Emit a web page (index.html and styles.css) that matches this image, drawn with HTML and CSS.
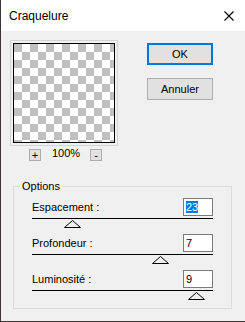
FILE: index.html
```html
<!DOCTYPE html>
<html lang="fr">
<head>
  <meta charset="UTF-8">
  <title>Craquelure</title>
  <link rel="stylesheet" href="styles.css">
</head>
<body>
  <div class="dialog">
    <div class="titlebar">
      <span class="title">Craquelure</span>
      <svg class="close" width="10" height="10" viewBox="0 0 10 10">
        <path d="M0.5 0.5 L9.5 9.5 M9.5 0.5 L0.5 9.5" stroke="#000" stroke-width="1.1" fill="none"/>
      </svg>
    </div>

    <div class="content">
      <div class="top">
        <div class="preview-col">
          <div class="preview-frame">
            <div class="preview"></div>
          </div>
          <div class="zoom-row">
            <button class="zoom-btn">+</button>
            <span class="zoom-value">100%</span>
            <button class="zoom-btn">-</button>
          </div>
        </div>
        <div class="actions">
          <button class="btn btn-default">OK</button>
          <button class="btn">Annuler</button>
        </div>
      </div>

      <fieldset class="options">
        <legend>Options</legend>

        <div class="slider">
          <div class="slider-head">
            <span>Espacement :</span>
            <div class="num"><span class="sel">23</span></div>
          </div>
          <div class="track">
            <svg class="thumb" style="left: 32px" width="17" height="8" viewBox="0 0 17 8">
              <polygon points="0.5,7.5 8.5,0.5 16.5,7.5" fill="#f0f0f0" stroke="#000"/>
            </svg>
          </div>
        </div>

        <div class="slider">
          <div class="slider-head">
            <span>Profondeur :</span>
            <div class="num">7</div>
          </div>
          <div class="track">
            <svg class="thumb" style="left: 120px" width="17" height="8" viewBox="0 0 17 8">
              <polygon points="0.5,7.5 8.5,0.5 16.5,7.5" fill="#f0f0f0" stroke="#000"/>
            </svg>
          </div>
        </div>

        <div class="slider">
          <div class="slider-head">
            <span>Luminosité :</span>
            <div class="num">9</div>
          </div>
          <div class="track">
            <svg class="thumb" style="left: 156px" width="17" height="8" viewBox="0 0 17 8">
              <polygon points="0.5,7.5 8.5,0.5 16.5,7.5" fill="#f0f0f0" stroke="#000"/>
            </svg>
          </div>
        </div>
      </fieldset>
    </div>
  </div>
</body>
</html>
```

FILE: styles.css
```css
body {
  margin: 0;
  background: #3b3535;
  font-family: "Liberation Sans", Arial, sans-serif;
  font-size: 11px;
  color: #000;
}

.dialog {
  width: 244px;
  height: 321px;
  margin-left: 1px;
  background: #f0f0f0;
  display: flex;
  flex-direction: column;
}

.titlebar {
  flex-shrink: 0;
  height: 31px;
  background: #fff;
  display: flex;
  align-items: center;
  justify-content: space-between;
  padding: 0 11px 0 8px;
}

.title {
  font-size: 12px;
  margin-top: 1px;
}

.close {
  display: block;
}

.content {
  padding: 9px 0 0 9px;
}

.top {
  display: flex;
  align-items: flex-start;
}

.preview-frame {
  border: 1px solid #d4d4d4;
  padding: 2px;
  width: 102px;
}

.preview {
  border: 1px solid #000;
  height: 98px;
  background: repeating-conic-gradient(#fff 0 25%, #c0c0c0 0 50%) 0 0 / 16px 16px;
}

.zoom-row {
  display: flex;
  align-items: center;
  margin-top: 3px;
  padding-left: 19px;
}

.zoom-btn {
  width: 12px;
  height: 12px;
  padding: 0;
  border: 1px solid #adadad;
  background: #e1e1e1;
  font-family: "Liberation Sans", Arial, sans-serif;
  font-size: 11px;
  line-height: 9px;
  color: #000;
}

.zoom-value {
  margin: 0 10px 0 11px;
  font-size: 11px;
  position: relative;
  top: -2px;
}

.actions {
  display: flex;
  flex-direction: column;
  gap: 13px;
  margin: 3px 0 0 29px;
}

.btn {
  width: 66px;
  height: 22px;
  padding: 0;
  border: 1px solid #adadad;
  background: #e1e1e1;
  font-family: "Liberation Sans", Arial, sans-serif;
  font-size: 11px;
  color: #000;
}

.btn-default {
  border: 2px solid #0078d7;
}

.options {
  margin: 19px 0 0 3px;
  width: 219px;
  box-sizing: border-box;
  border: 1px solid #dcdcdc;
  padding: 5px 18px 8px 18px;
}

.options legend {
  padding: 0 2px;
  margin-left: -12px;
  line-height: 13px;
}

.slider {
  margin-bottom: 6px;
}

.slider:last-child {
  margin-bottom: 0;
}

.slider-head {
  display: flex;
  align-items: center;
  justify-content: space-between;
  height: 18px;
}

.num {
  width: 30px;
  height: 18px;
  box-sizing: border-box;
  border: 1px solid #7a7a7a;
  background: #fff;
  padding: 1px 2px;
  line-height: 14px;
}

.sel {
  background: #0078d7;
  color: #fff;
}

.track {
  position: relative;
  margin-top: 2px;
  border-top: 1px solid #000;
  height: 9px;
}

.thumb {
  position: absolute;
  top: 1px;
  display: block;
}
```
